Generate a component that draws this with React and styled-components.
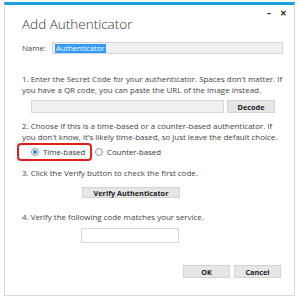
import React from "react";
import styled, { createGlobalStyle } from "styled-components";

const Global = createGlobalStyle`
  html, body { margin: 0; padding: 0; background: #fff; }
  body { font-family: "Open Sans", "Noto Sans", sans-serif; color: #3a3a3a; }
  * { box-sizing: border-box; }
`;

const Window = styled.div`
  margin: 2px 0 0 4px;
  width: 291px;
  height: 294px;
  border: 1px solid #d9d9d9;
  border-top: 3px solid #1ba1e2;
  display: flex;
  flex-direction: column;
  padding: 0 4px 0 17px;
  background: #fff;
`;

const Header = styled.div`
  display: flex;
  justify-content: space-between;
  align-items: flex-start;
  height: 28px;
`;

const Title = styled.h1`
  margin: 10px 0 0 0;
  font-size: 13.5px;
  line-height: 18px;
  font-weight: 300;
  color: #333;
`;

const Controls = styled.div`
  display: flex;
  gap: 9px;
  margin-top: 4px;
  margin-right: 3px;
  font-size: 8px;
  line-height: 8px;
  color: #222;
  font-weight: 700;
`;

const Text = styled.p`
  margin: ${(p) => p.$mt || 0}px 0 0 ${(p) => p.$ml || 0}px;
  font-size: 7.95px;
  line-height: 11px;
  color: #444;
  white-space: nowrap;
`;

const NameRow = styled.div`
  display: flex;
  align-items: center;
  margin-top: 9px;
  height: 12px;
`;

const Label = styled.span`
  font-size: 7.8px;
  color: #444;
  width: 30px;
`;

const Field = styled.div`
  width: ${(p) => p.$w}px;
  height: ${(p) => p.$h}px;
  margin-left: ${(p) => p.$ml || 0}px;
  margin-top: ${(p) => p.$mt || 0}px;
  background: ${(p) => (p.$white ? "#fff" : "#f0f0f0")};
  border: 1px solid #d6d6d6;
  display: flex;
  align-items: center;
  padding-left: 2px;
`;

const Selected = styled.span`
  background: #3399ff;
  color: #fff;
  font-size: 7.6px;
  line-height: 9px;
  padding: 0 1px;
`;

const Row = styled.div`
  display: flex;
  align-items: center;
  gap: ${(p) => p.$gap || 0}px;
  margin-top: ${(p) => p.$mt || 0}px;
  margin-left: ${(p) => p.$ml || 0}px;
  margin-right: ${(p) => p.$mr || 0}px;
  justify-content: ${(p) => p.$justify || "flex-start"};
`;

const Button = styled.button`
  width: ${(p) => p.$w}px;
  height: ${(p) => p.$h}px;
  margin: 0 0 0 ${(p) => p.$ml || 0}px;
  padding: 0;
  background: #e6e6e6;
  border: 1px solid #d3d3d3;
  font-family: "Open Sans", "Noto Sans", sans-serif;
  font-size: 7.3px;
  font-weight: 700;
  color: #222;
  display: flex;
  align-items: center;
  justify-content: center;
`;

const RadioRow = styled.div`
  display: flex;
  align-items: center;
  height: 18px;
  margin-left: -5px;
`;

const Highlight = styled.div`
  width: 75px;
  height: 18px;
  border: 2px solid #e41c1c;
  border-radius: 4px;
  display: flex;
  align-items: center;
  padding-left: 12px;
`;

const Radio = styled.span`
  width: 8px;
  height: 8px;
  border-radius: 50%;
  border: 1px solid #9a9a9a;
  background: #fff;
  display: inline-flex;
  align-items: center;
  justify-content: center;
  margin-right: 4px;
  flex-shrink: 0;
  &::after {
    content: "";
    width: 4px;
    height: 4px;
    border-radius: 50%;
    background: ${(p) => (p.$checked ? "#1e8fd6" : "transparent")};
  }
`;

const Option = styled.label`
  display: flex;
  align-items: center;
  font-size: 7.8px;
  color: #333;
  margin-left: ${(p) => p.$ml || 0}px;
`;

export default function App() {
  return (
    <>
      <Global />
      <Window>
        <Header>
          <Title>Add Authenticator</Title>
          <Controls>
            <span>–</span>
            <span>✕</span>
          </Controls>
        </Header>
        <NameRow>
          <Label>Name:</Label>
          <Field $w={231} $h={12}>
            <Selected>Authenticator</Selected>
          </Field>
        </NameRow>
        <Text $mt={20}>
          1. Enter the Secret Code for your authenticator. Spaces don't matter. If
          <br />
          you have a QR code, you can paste the URL of the image instead.
        </Text>
        <Row $mt={4} $ml={9} $gap={3}>
          <Field $w={193} $h={13} />
          <Button $w={48} $h={13}>Decode</Button>
        </Row>
        <Text $mt={8}>
          2. Choose if this is a time-based or a counter-based authenticator. If
          <br />
          you don't know, it's likely time-based, so just leave the default choice.
        </Text>
        <RadioRow>
          <Highlight>
            <Option>
              <Radio $checked />
              Time-based
            </Option>
          </Highlight>
          <Option $ml={3}>
            <Radio />
            Counter-based
          </Option>
        </RadioRow>
        <Text $mt={7}>3. Click the Verify button to check the first code.</Text>
        <Row $mt={8}>
          <Button $w={98} $h={11} $ml={60}>Verify Authenticator</Button>
        </Row>
        <Text $mt={14}>4. Verify the following code matches your service.</Text>
        <Field $white $w={98} $h={15} $ml={59} $mt={5} />
        <Row $mt={22} $gap={4} $justify="flex-end" $mr={9}>
          <Button $w={47} $h={13}>OK</Button>
          <Button $w={47} $h={13}>Cancel</Button>
        </Row>
      </Window>
    </>
  );
}
